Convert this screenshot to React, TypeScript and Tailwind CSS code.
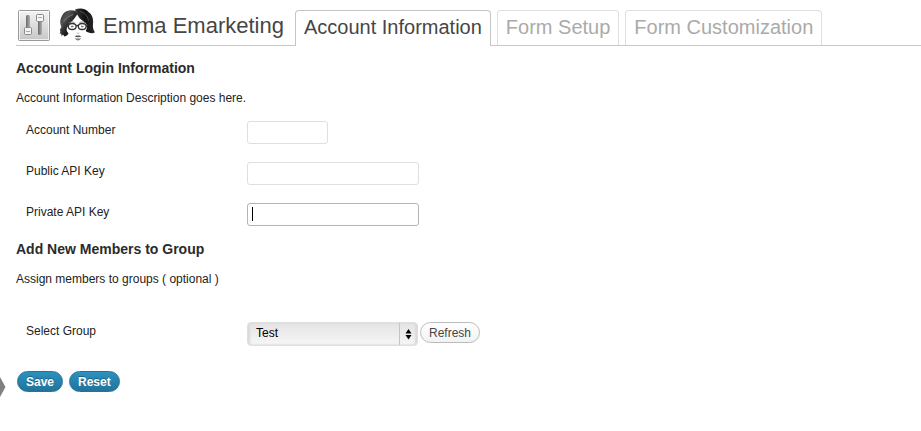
import type { ReactNode } from "react";

function SettingsIcon() {
  return (
    <svg width="34" height="32" viewBox="0 0 34 32" aria-hidden="true">
      <defs>
        <linearGradient id="plate" x1="0" y1="0" x2="0" y2="1">
          <stop offset="0" stopColor="#f4f4f4" />
          <stop offset="1" stopColor="#c6c6c6" />
        </linearGradient>
        <linearGradient id="slot" x1="0" y1="0" x2="1" y2="0">
          <stop offset="0" stopColor="#6a6a6a" />
          <stop offset="1" stopColor="#b0b0b0" />
        </linearGradient>
      </defs>
      <rect x="1.5" y="0.5" width="31" height="30" rx="1" fill="url(#plate)" stroke="#999" />
      <rect x="2.5" y="1.5" width="29" height="28" fill="none" stroke="#fff" strokeOpacity="0.7" />
      <rect x="9" y="5" width="4" height="20" rx="1.5" fill="url(#slot)" />
      <rect x="21" y="5" width="4" height="20" rx="1.5" fill="url(#slot)" />
      <rect x="7.5" y="17.500" width="7" height="7" rx="1" fill="#f2f2f2" stroke="#8a8a8a" />
      <path d="M9 21.500h4" stroke="#aaa" />
      <rect x="19.500" y="4.500" width="7" height="7" rx="1" fill="#f6f6f6" stroke="#8a8a8a" />
      <path d="M21 7.500h4" stroke="#aaa" />
    </svg>
  );
}

function EmmaLogo() {
  return (
    <svg width="36" height="34" viewBox="0 0 36 34" aria-hidden="true">
      <defs>
        <linearGradient id="hairLeft" x1="0" y1="0" x2="1" y2="1">
          <stop offset="0" stopColor="#1a1a1a" />
          <stop offset="0.3" stopColor="#555" />
          <stop offset="0.6" stopColor="#1c1c1c" />
          <stop offset="1" stopColor="#111" />
        </linearGradient>
        <linearGradient id="hairRight" x1="0" y1="0" x2="1" y2="0">
          <stop offset="0" stopColor="#3a3a3a" />
          <stop offset="0.5" stopColor="#111" />
          <stop offset="1" stopColor="#2a2a2a" />
        </linearGradient>
      </defs>
      <path
        d="M17 3C11 1 5 3 3 8c-2.500 4-2 8-.5 11-1.500 1.500-2 3.500-1 5l-1 1.500 2 .2-.5 2 2.300-1 1 1.800c2.500-.5 4-2 4.200-3.500-2-1.500-2.500-3.500-.7-7C10.500 15 15 12 18.500 6z"
        fill="url(#hairLeft)"
      />
      <path
        d="M16 1.500C21-.5 27 .5 29.500 4c4.500 3 5 8 4.500 12-.4 4 .5 6.500 2 8.200-2.200 1.600-6.200 1.200-9.300-1.200 2-3 1.500-6.500-.7-8.500-3-2.500-6-4-7.500-7.500-.8-1.700-1.300-3.500-2.500-5.500z"
        fill="url(#hairRight)"
      />
      <path d="M5 13.500c2-3.500 5-5.500 9-7" fill="none" stroke="#888" strokeWidth=".8" />
      <path d="M21 3.500c4 1 7.500 4 8.500 9" fill="none" stroke="#666" strokeWidth=".7" />
      <path d="M9.500 15c2-1.300 4-1.300 6-.5M20.500 14.500c2-.8 4-.8 6 .5" fill="none" stroke="#777" strokeWidth=".8" />
      <g fill="none" stroke="#333" strokeWidth="1.300">
        <ellipse cx="13.200" cy="18.500" rx="3.900" ry="3" />
        <ellipse cx="23.200" cy="18.500" rx="3.900" ry="3" />
        <path d="M17.200 18q1.200-1 2.400 0M7 17.500l2.500.5M27 18l2-.5" />
      </g>
      <path d="M12 18.500h2.500M22 18.500h2.500" stroke="#777" strokeWidth="1.500" />
      <path d="M15.500 28.500c1.500-.8 2.500-1.500 3.500-.8 1-.7 2 0 3.500.8-2 1-5 1-7 0z" fill="#555" />
      <path d="M16 30c2 .7 4 .7 6 0-1 3.200-5 3.200-6 0z" fill="#777" />
      <path d="M17.500 25q1.500.8 3 0" fill="none" stroke="#aaa" strokeWidth=".8" />
    </svg>
  );
}

function Tab({ active = false, children }: { active?: boolean; children: ReactNode }) {
  return (
    <a
      href="#"
      aria-current={active ? "page" : undefined}
      className={
        active
          ? "-mb-px h-9 whitespace-nowrap rounded-t border border-b-0 border-[#c4c4c4] bg-white px-2 text-xl leading-8 text-[#464646]"
          : "h-[35px] whitespace-nowrap rounded-t border border-b-0 border-[#dfdfdf] bg-white px-2 text-xl leading-8 text-[#aaa]"
      }
    >
      {children}
    </a>
  );
}

function Row({ id, label, children }: { id: string; label: string; children: ReactNode }) {
  return (
    <div className="grid grid-cols-[221px_1fr] items-start pl-[10px]">
      <label htmlFor={id} className="leading-[18px]">
        {label}
      </label>
      <div className="flex items-start">{children}</div>
    </div>
  );
}

const primaryButton =
  "h-[21px] rounded-full border border-[#21759b] bg-linear-to-b from-[#2c91bf] to-[#22739a] px-2 text-xs font-bold text-white [text-shadow:0_-1px_0_rgba(0,0,0,0.3)]";

export default function App() {
  return (
    <div className="relative bg-white pb-10 pl-4 pt-2 font-['Liberation_Sans',Arial,sans-serif] text-xs text-[#222]">
      <svg className="absolute left-0 top-[377px]" width="6" height="20" viewBox="0 0 6 20" aria-hidden="true">
        <path d="M0 0l5.500 10L0 20z" fill="#808080" />
      </svg>

      <header className="flex h-[38px] items-end border-b border-[#c8c8c8] pl-px">
        <div className="mr-[11px] flex h-full items-start">
          <div className="mr-2 pt-[2px]">
            <SettingsIcon />
          </div>
          <EmmaLogo />
          <h1 className="ml-2 whitespace-nowrap text-[22px] leading-9 text-[#464646]">Emma Emarketing</h1>
        </div>
        <nav className="flex items-end gap-[6px]">
          <Tab active>Account Information</Tab>
          <Tab>Form Setup</Tab>
          <Tab>Form Customization</Tab>
        </nav>
      </header>

      <form onSubmit={(event) => event.preventDefault()}>
        <section className="pt-3">
          <h2 className="text-sm font-bold leading-5 text-[#2b2b2b]">Account Login Information</h2>
          <p className="mt-[11px] leading-[18px]">Account Information Description goes here.</p>
          <div className="mt-[14px] flex flex-col gap-[18px]">
            <Row id="account-number" label="Account Number">
              <input
                id="account-number"
                type="text"
                className="h-[23px] w-[81px] rounded-[3px] border border-[#dfdfdf] bg-white px-1 outline-none"
              />
            </Row>
            <Row id="public-key" label="Public API Key">
              <input
                id="public-key"
                type="text"
                className="h-[23px] w-[172px] rounded-[3px] border border-[#dfdfdf] bg-white px-1 outline-none"
              />
            </Row>
            <Row id="private-key" label="Private API Key">
              <span className="relative flex">
                <input
                  id="private-key"
                  type="text"
                  className="h-[23px] w-[172px] rounded-[3px] border border-[#b4b4b4] bg-white px-1 caret-transparent outline-none"
                />
                <span className="absolute left-[5px] top-1 h-[14px] w-px bg-black" aria-hidden="true" />
              </span>
            </Row>
          </div>
        </section>

        <section className="pt-[13px]">
          <h2 className="text-sm font-bold leading-5 text-[#2b2b2b]">Add New Members to Group</h2>
          <p className="mt-[11px] leading-[18px]">Assign members to groups ( optional )</p>
          <div className="mt-[34px]">
            <Row id="group" label="Select Group">
              <span className="relative flex">
                <select
                  id="group"
                  defaultValue="Test"
                  className="h-6 w-[171px] appearance-none rounded border border-[#dfdfdf] bg-linear-to-b from-[#e4e4e4] to-[#f6f6f6] px-2 pb-[2px] text-black shadow-[inset_2px_0_2px_#dadada,inset_-2px_0_2px_#dadada] outline-none"
                >
                  <option>Test</option>
                </select>
                <svg
                  className="pointer-events-none absolute right-0 top-0"
                  width="19"
                  height="24"
                  viewBox="0 0 19 24"
                  aria-hidden="true"
                >
                  <path d="M.5 1v22" stroke="#c4c4c4" />
                  <path d="M9.500 7l3 4.500h-6zM9.500 17.500l3-4.500h-6z" fill="#000" />
                </svg>
              </span>
              <button
                type="button"
                className="ml-[2px] h-[21px] rounded-full border border-[#bbb] bg-linear-to-b from-white to-[#f2f2f2] px-2 text-[#464646]"
              >
                Refresh
              </button>
            </Row>
          </div>
        </section>

        <div className="flex gap-[6px] pl-px pt-[25px]">
          <button type="submit" className={primaryButton}>
            Save
          </button>
          <button type="reset" className={primaryButton}>
            Reset
          </button>
        </div>
      </form>
    </div>
  );
}
